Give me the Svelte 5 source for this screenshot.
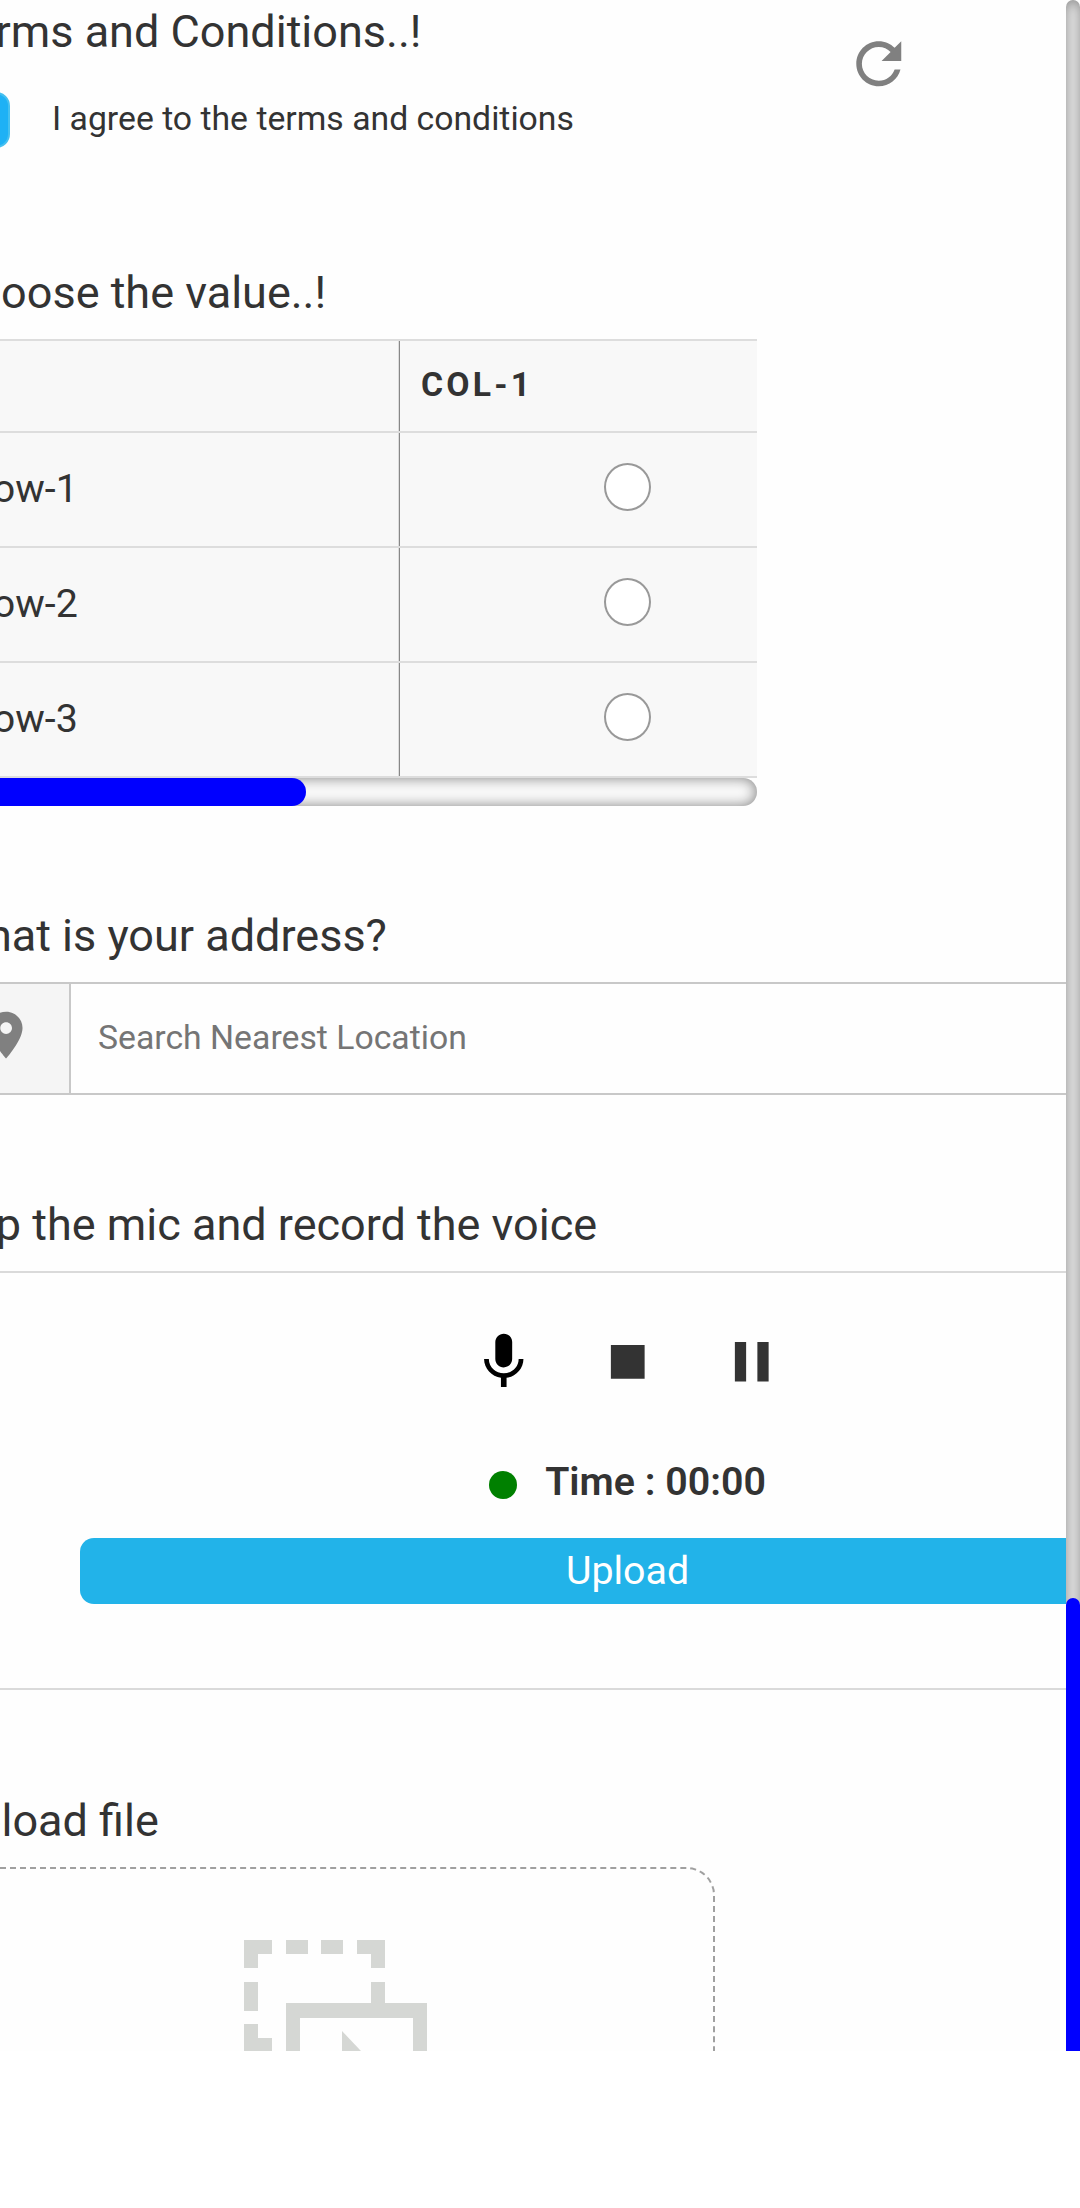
<script>
  const rows = ['Row-1', 'Row-2', 'Row-3'];
</script>

<div class="screen">
  <main class="form">
    <section class="terms">
      <div class="terms-body">
        <h2>Terms and Conditions..!</h2>
        <label class="agree">
          <span class="checkbox"></span>
          <span class="agree-text">I agree to the terms and conditions</span>
        </label>
      </div>
      <svg class="refresh" viewBox="0 0 24 24"><path d="M17.65 6.35C16.2 4.9 14.21 4 12 4c-4.42 0-7.99 3.58-7.99 8s3.57 8 7.99 8c3.73 0 6.84-2.55 7.73-6h-2.08c-.82 2.33-3.04 4-5.65 4-3.31 0-6-2.69-6-6s2.69-6 6-6c1.66 0 3.14.69 4.22 1.78L13 11h7V4l-2.35 2.35z" /></svg>
    </section>

    <section class="choose">
      <h2>Choose the value..!</h2>
      <div class="matrix">
        <div class="row head">
          <div class="cell name"></div>
          <div class="cell title">COL-1</div>
        </div>
        {#each rows as row}
          <div class="row">
            <div class="cell name">{row}</div>
            <div class="cell option"><span class="radio"></span></div>
          </div>
        {/each}
      </div>
      <div class="hbar"><div class="hthumb"></div></div>
    </section>

    <section class="address">
      <h2>What is your address?</h2>
      <div class="search">
        <div class="addon">
          <svg class="pin" viewBox="0 0 24 24"><path d="M12 2C8.13 2 5 5.13 5 9c0 5.25 7 13 7 13s7-7.75 7-13c0-3.87-3.13-7-7-7zm0 9.5c-1.38 0-2.5-1.12-2.5-2.5s1.12-2.5 2.5-2.5 2.5 1.12 2.5 2.5-1.12 2.5-2.5 2.5z" /></svg>
        </div>
        <div class="field">Search Nearest Location</div>
      </div>
    </section>

    <section class="voice">
      <h2>Tap the mic and record the voice</h2>
      <div class="recorder">
        <div class="controls">
          <svg class="mic" viewBox="0 0 24 24"><path d="M12 14c1.66 0 2.99-1.34 2.99-3L15 5c0-1.66-1.34-3-3-3S9 3.34 9 5v6c0 1.66 1.34 3 3 3zm5.3-3c0 3-2.54 5.1-5.3 5.1S6.7 14 6.7 11H5c0 3.41 2.72 6.23 6 6.72V21h2v-3.28c3.28-.48 6-3.3 6-6.72h-1.7z" /></svg>
          <svg viewBox="0 0 24 24"><path d="M6 6h12v12H6z" /></svg>
          <svg viewBox="0 0 24 24"><path d="M6 19h4V5H6v14zm8-14v14h4V5h-4z" /></svg>
        </div>
        <div class="timer"><span class="dot"></span><span class="time">Time : 00:00</span></div>
        <div class="upload">Upload</div>
      </div>
    </section>

    <section class="file">
      <h2>Upload file</h2>
      <div class="dropzone">
        <svg class="drop" viewBox="0 0 183 183">
          <path d="M0 0h28v14H14v14H0zM42 0h22v14H42zM77 0h22v14H77zM113 0h28v28h-14V14h-14zM0 42h14v29H0zM0 84h14v14h14v14H0zM127 42h14v21h42v120H42V63h85zM56 78v91h113V78z" fill-rule="evenodd" />
          <path d="M98 91l56 59H98z" />
        </svg>
      </div>
    </section>
  </main>
  <aside class="vbar"><div class="vthumb"></div></aside>
</div>

<style>
  :global(body) {
    background: #fff;
  }
  .screen {
    display: flex;
    width: 1080px;
    height: 2051px;
    overflow: hidden;
    background: #fefefe;
    font-family: Roboto, sans-serif;
    color: #333;
  }
  .screen * {
    box-sizing: border-box;
  }
  .form {
    flex: none;
    width: 1124px;
    height: 2051px;
    margin-left: -58px;
    overflow: hidden;
  }
  h2 {
    height: 60px;
    margin: 0 0 17px;
    padding-left: 5px;
    font-size: 45px;
    line-height: 62px;
    font-weight: 400;
    white-space: nowrap;
  }
  .terms {
    display: flex;
    height: 262px;
    padding-top: 1px;
  }
  .terms-body {
    width: 902.75px;
  }
  .agree {
    display: flex;
    margin-top: 31px;
    height: 56px;
  }
  .terms h2 {
    margin: 0;
  }
  .checkbox {
    width: 56px;
    height: 56px;
    margin-left: 12px;
    border: 2px solid #45c0f0;
    border-radius: 14px;
    background: #1eb1f5;
  }
  .agree-text {
    margin-left: 42px;
    font-size: 33.75px;
    line-height: 54px;
    white-space: nowrap;
  }
  .refresh {
    width: 67.5px;
    height: 67.5px;
    margin-top: 28.5px;
    fill: #808080;
  }
  .choose {
    height: 643px;
  }
  .matrix {
    width: 815px;
    overflow: hidden;
    border-top: 2px solid #ddd;
    background: #f8f8f8;
  }
  .row {
    display: flex;
    width: 913px;
    height: 115px;
    border-bottom: 2px solid #ddd;
  }
  .head {
    height: 92px;
  }
  .cell {
    display: flex;
    align-items: center;
  }
  .name {
    width: 458px;
    padding: 0 0 3px 26.5px;
    border-right: 1px solid #888;
    box-shadow: inset -1px 0 #ddd;
    font-size: 39.375px;
  }
  .title {
    padding: 0 0 3px 21px;
    font-size: 33.75px;
    font-weight: 700;
    letter-spacing: 3.2px;
  }
  .option {
    flex: 1;
    justify-content: center;
    padding-bottom: 5px;
  }
  .radio {
    width: 47px;
    height: 48px;
    border: 2px solid #999;
    border-radius: 50%;
    background: #fff;
  }
  .hbar {
    width: 815px;
    height: 28px;
    border-radius: 14px;
    background: #fafafa;
    box-shadow: inset 0 0 14px #808080;
  }
  .hthumb {
    width: 364px;
    height: 28px;
    border-radius: 14px;
    background: #00f;
  }
  .address {
    height: 289px;
  }
  .search {
    display: flex;
    width: 1371px;
    height: 113px;
    border: 2px solid #c8c8c8;
  }
  .addon {
    width: 127px;
    padding: 23px 0 0 34px;
    border-right: 2px solid #c8c8c8;
    background: #f5f5f5;
  }
  .pin {
    display: block;
    width: 56.25px;
    height: 56.25px;
    fill: #808080;
  }
  .field {
    padding-left: 27px;
    font-size: 33.75px;
    line-height: 107px;
    color: #757575;
  }
  .voice {
    height: 597px;
  }
  .recorder {
    width: 1371px;
    height: 419px;
    padding: 55.25px 136px 0;
    border: 2px solid #dadada;
  }
  .controls {
    display: flex;
    justify-content: center;
    gap: 56.25px;
    height: 67.5px;
  }
  .controls svg {
    width: 67.5px;
    height: 67.5px;
    fill: #333;
  }
  .controls .mic {
    fill: #000;
  }
  .timer {
    display: flex;
    justify-content: center;
    align-items: center;
    height: 60px;
    margin-top: 56.25px;
  }
  .dot {
    width: 28px;
    height: 28px;
    margin: 6px 28px 0 0;
    border-radius: 50%;
    background: green;
  }
  .time {
    padding-bottom: 2px;
    font-size: 39.375px;
    font-weight: 600;
  }
  .upload {
    height: 66px;
    margin-top: 26px;
    border-radius: 14px;
    background: #22b3e9;
    color: #fff;
    font-size: 39.375px;
    line-height: 66px;
    text-align: center;
  }
  .file h2 {
    margin-bottom: 16px;
    line-height: 60px;
  }
  .dropzone {
    width: 773px;
    height: 420px;
    padding: 71px 0 0 300px;
    border: 2px dashed #a0a0a0;
    border-radius: 28px;
  }
  .drop {
    display: block;
    width: 183px;
    height: 183px;
    fill: #d5d7d4;
  }
  .vbar {
    flex: none;
    width: 14px;
    height: 2300px;
    padding-top: 1598px;
    border-radius: 7px;
    background: #f5f5f5;
    box-shadow: inset 0 0 14px #808080;
  }
  .vthumb {
    height: 640px;
    border-radius: 7px;
    background: #00f;
  }
</style>
